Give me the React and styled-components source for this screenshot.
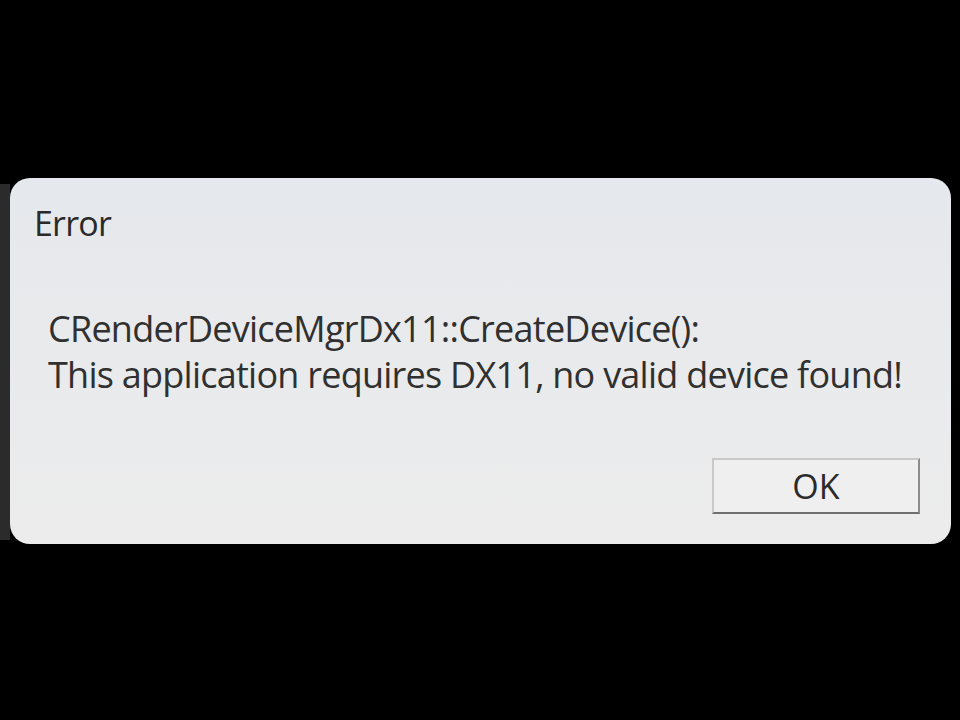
import React from "react";
import styled, { createGlobalStyle } from "styled-components";

const GlobalStyle = createGlobalStyle`
  html, body {
    margin: 0;
    padding: 0;
    background: #000;
  }
  #root {
    width: 960px;
    height: 720px;
  }
`;

const Screen = styled.div`
  width: 960px;
  height: 720px;
  background: #000;
  padding-top: 178px;
  box-sizing: border-box;
  display: flex;
  align-items: flex-start;
  font-family: "Open Sans", "Noto Sans", sans-serif;
`;

const BackEdge = styled.div`
  width: 10px;
  height: 356px;
  margin-top: 6px;
  background: #2b2b2b;
  flex-shrink: 0;
`;

const Dialog = styled.div`
  width: 941px;
  height: 366px;
  background: linear-gradient(180deg, #e5e8ec 0%, #e9eaec 45%, #ececec 100%);
  border-radius: 20px;
  box-sizing: border-box;
  padding: 22px 30px 30px 24px;
  display: flex;
  flex-direction: column;
`;

const Title = styled.div`
  font-size: 34px;
  line-height: 46px;
  letter-spacing: -0.8px;
  color: #2a2a2a;
`;

const Message = styled.div`
  margin-top: 60px;
  margin-left: 14px;
  font-size: 36px;
  line-height: 46px;
  color: #303030;
  letter-spacing: -0.75px;
`;

const Footer = styled.div`
  margin-top: auto;
  display: flex;
  justify-content: flex-end;
`;

const Button = styled.button`
  width: 208px;
  height: 56px;
  background: #efefef;
  border: 2px solid #c9c9c9;
  border-right-color: #8c8c8c;
  border-bottom-color: #6f6f6f;
  font-family: inherit;
  font-size: 34px;
  color: #2a2a2a;
  padding: 0;
  margin-right: 1px;
`;

export default function App() {
  return (
    <>
      <GlobalStyle />
      <Screen>
        <BackEdge />
        <Dialog>
          <Title>Error</Title>
          <Message>
            CRenderDeviceMgrDx11::CreateDevice():
            <br />
            This application requires DX11, no valid device found!
          </Message>
          <Footer>
            <Button>OK</Button>
          </Footer>
        </Dialog>
      </Screen>
    </>
  );
}
